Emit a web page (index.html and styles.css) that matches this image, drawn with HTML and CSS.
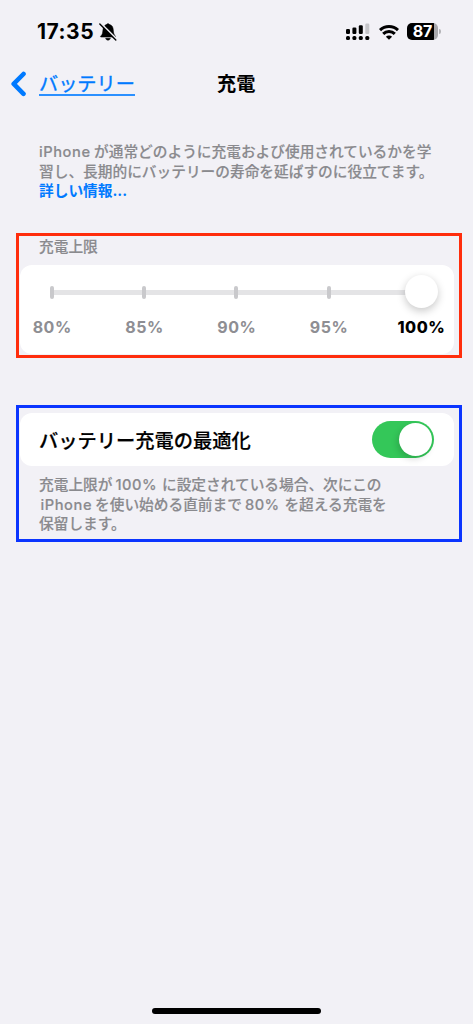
FILE: index.html
```html
<!DOCTYPE html>
<html lang="ja">
<head>
<meta charset="utf-8">
<title>充電</title>
<link rel="stylesheet" href="styles.css">
</head>
<body>
<header class="status">
  <div class="status-left">
    <span class="clock">17:35</span>
    <svg class="bell" viewBox="0 0 20 20" width="20" height="20">
      <path d="M2.600 14.200c2-1.800 2-3.300 2.300-6C5.100 4.700 7 3 8.300 2.600 8.700 1.400 11.300 1.400 11.700 2.600 14 3.300 15.100 5 15.300 8c.2 3.200.6 4.400 2.100 6.200.3.600 0 .9-.6.900H3.200c-.6 0-.9-.4-.6-.9zM7.600 16.300h4.800c-.4 1.300-1.300 1.900-2.400 1.900s-2-.6-2.400-1.900z" stroke="#000" stroke-width=".5"/>
      <path d="M3.100 1.700 19 17.400" stroke="#f2f1f6" stroke-width="1.800"/>
      <path d="M1.800 2.100 17.800 17.900" stroke="#000" stroke-width="1.400" stroke-linecap="round"/>
    </svg>
  </div>
  <div class="status-right">
    <svg class="signal" viewBox="0 0 25 18" width="25" height="18">
      <rect x="1" y="6" width="4" height="5" rx="1.200"/>
      <rect x="7.400" y="4.600" width="4" height="6.400" rx="1.200"/>
      <rect x="13.800" y="2.300" width="4" height="8.700" rx="1.200"/>
      <rect x="20.300" y=".6" width="4" height="10.400" rx="1.200" fill="#c5c5c9"/>
      <rect x="1" y="13" width="4" height="4" rx="1.600"/>
      <rect x="7.400" y="13" width="4" height="4" rx="1.600"/>
      <rect x="13.800" y="13" width="4" height="4" rx="1.600"/>
      <rect x="20.300" y="13" width="4" height="4" rx="1.600"/>
    </svg>
    <svg class="wifi" viewBox="0 0 20 16" width="20" height="16" fill="none" stroke="#000" stroke-width="3">
      <path d="M1 6.100a12.900 12.900 0 0 1 18 0"/>
      <path d="M4.200 9.900a8.200 8.200 0 0 1 11.600 0"/>
      <path d="M10 15.800 6.900 12.800a4.200 4.200 0 0 1 6.200 0z" fill="#000" stroke="none"/>
    </svg>
    <div class="battery"><span class="battery-body">87</span><span class="battery-cap"></span></div>
  </div>
</header>

<nav class="nav">
  <a class="back">
    <svg viewBox="0 0 16 26" width="16" height="26"><path d="M13.500 3 3.700 12.900 13.500 22.800" fill="none" stroke="#007aff" stroke-width="4.600" stroke-linecap="round" stroke-linejoin="round"/></svg>
    <span class="back-label">バッテリー</span>
  </a>
  <h1 class="title">充電</h1>
</nav>

<main>
  <p class="note intro">
    <span class="line"><span class="latin">iPhone</span>が通常どのように充電および使用されているかを学</span>
    <span class="line">習し、長期的にバッテリーの寿命を延ばすのに役立てます。</span>
    <a class="line link">詳しい情報...</a>
  </p>

  <section class="frame limit">
    <h2 class="caption">充電上限</h2>
    <div class="card slider-card">
      <div class="slider">
        <i class="tick"></i><i class="tick"></i><i class="tick"></i><i class="tick"></i><i class="knob"></i>
      </div>
      <div class="labels">
        <span>80%</span><span>85%</span><span>90%</span><span>95%</span><span class="selected">100%</span>
      </div>
    </div>
  </section>

  <section class="frame optimize">
    <div class="card toggle-card">
      <span class="toggle-label">バッテリー充電の最適化</span>
      <span class="switch"><i class="switch-knob"></i></span>
    </div>
    <p class="note">
      <span class="line">充電上限が<span class="num hundred">100%</span>に設定されている場合、次にこの</span>
      <span class="line"><span class="latin inset">iPhone</span>を使い始める直前まで<span class="num">80%</span>を超える充電を</span>
      <span class="line">保留します。</span>
    </p>
  </section>
</main>
<footer class="home"><span class="home-bar"></span></footer>
</body>
</html>
```
FILE: styles.css
```css
* { box-sizing: border-box; }
html, body { height: 100%; }
body {
  margin: 0;
  display: flex;
  flex-direction: column;
  background: #f2f1f6;
  color: #000;
  font-family: Inter, "Noto Sans CJK JP", sans-serif;
  overflow: hidden;
}
h1, h2, p { margin: 0; }
.status {
  height: 62px;
  padding: 1px 32px 0 37px;
  display: flex;
  justify-content: space-between;
  align-items: center;
}
.status-left, .status-right { display: flex; align-items: center; }
.clock { font-size: 21px; font-weight: 700; letter-spacing: .5px; width: 61px; white-space: nowrap; }
.status-right { gap: 8px; }
.signal { margin-right: 1px; }
.battery { display: flex; align-items: center; gap: 1px; }
.battery-body {
  width: 31px;
  height: 17px;
  border-radius: 5px;
  background: linear-gradient(90deg, #000 27px, #a9a9ad 27px);
  color: #fff;
  font-size: 16px;
  font-weight: 700;
  line-height: 17px;
  text-align: center;
}
.battery-cap { width: 2px; height: 5px; border-radius: 0 2px 2px 0; background: #b4b4b8; }
.nav {
  height: 44px;
  padding-left: 10px;
  display: grid;
  grid-template-columns: 207px auto;
  align-items: center;
}
.back { display: flex; align-items: center; gap: 13px; color: #007aff; }
.back-label {
  font-size: 19.200px;
  line-height: 23px;
  height: 23px;
  border-bottom: 2px solid #2b90ff;
  -webkit-text-stroke: .35px currentColor;
}
.title { font-size: 19.200px; font-weight: 700; line-height: 24px; }
.note {
  color: #8a8a8e;
  font-size: 14.700px;
  line-height: 19.500px;
  font-weight: 500;
  padding-left: 39px;
  -webkit-text-stroke: .15px currentColor;
}
.line { display: block; white-space: nowrap; }
.latin { display: inline-block; width: 55px; letter-spacing: .55px; }
.intro { padding-top: 37px; height: 127px; }
.link { color: #007aff; font-weight: 700; -webkit-text-stroke: 0; }
.frame { margin: 0 11px 0 16px; border: 3px solid #ff2d0c; }
.card { background: #fff; border-radius: 12px; }
.limit { height: 125px; padding: 0 5px 0 1px; }
.caption {
  padding-left: 19px;
  height: 29px;
  color: #8a8a8e;
  font-size: 14.700px;
  line-height: 23px;
  font-weight: 500;
  -webkit-text-stroke: .15px currentColor;
}
.slider-card { height: 89px; padding-top: 10px; }
.slider {
  height: 33px;
  padding-left: 29.700px;
  display: grid;
  grid-template-columns: 92.400px 92.400px 92.400px 78px 33px;
  align-items: center;
  background: linear-gradient(#e4e4e6, #e4e4e6) 31px 15px / 360px 5px no-repeat;
}
.tick { width: 4px; height: 13px; border-radius: 2px; background: #c9c9cc; margin-top: 2px; }
.knob { width: 33px; height: 33px; border-radius: 50%; background: #fff; box-shadow: 0 3px 9px rgba(0,0,0,.22); }
.labels {
  display: grid;
  grid-template-columns: repeat(5, 92.300px);
  margin: 8px 0 0 -14px;
  color: #8e8e93;
  font-size: 16px;
  line-height: 22px;
  font-weight: 700;
  letter-spacing: .5px;
  text-align: center;
}
.selected { color: #000; font-weight: 800; }
.optimize { margin-top: 47px; height: 137px; border-color: #0b35ff; padding: 5px 5px 0 1px; }
.toggle-card {
  height: 53px;
  padding: 0 20px 0 19px;
  display: flex;
  justify-content: space-between;
  align-items: center;
}
.toggle-label { font-size: 19.250px; font-weight: 500; -webkit-text-stroke: .2px currentColor; }
.switch { width: 62px; height: 37px; padding: 2px; border-radius: 19px; background: #34c759; display: flex; justify-content: flex-end; }
.switch-knob { width: 33px; height: 33px; border-radius: 50%; background: #fff; box-shadow: -2px 3px 6px rgba(0,0,0,.15); }
.optimize .note { padding: 10px 0 0 19px; }
.inset { width: 56px; padding-left: 1.500px; }
.num { display: inline-block; width: 42.500px; padding-left: 3px; letter-spacing: .5px; }
.hundred { width: 49.500px; }
.home { margin-top: auto; height: 17px; display: flex; justify-content: center; }
.home-bar { width: 169px; height: 6px; border-radius: 3px; background: #000; margin-top: 1px; }
```
